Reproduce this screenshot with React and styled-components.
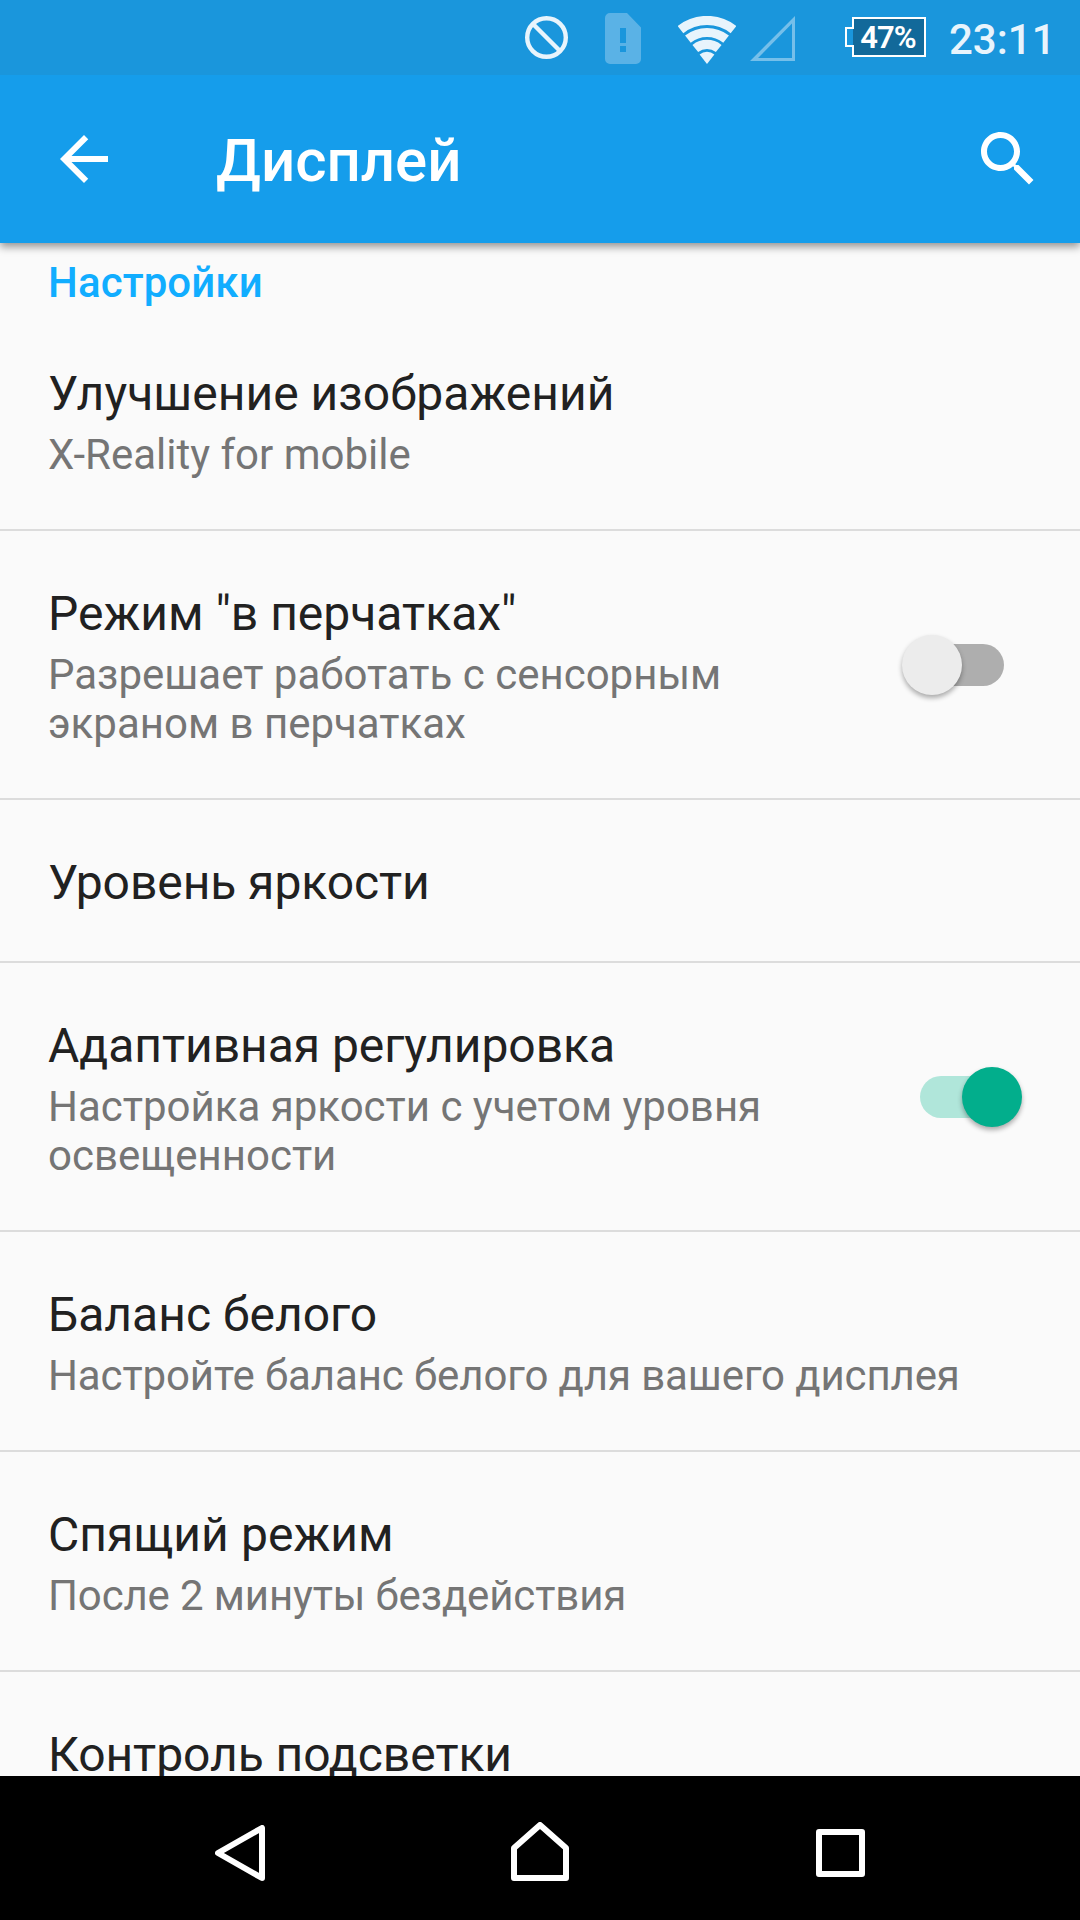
import React from 'react'
import styled, { createGlobalStyle } from 'styled-components'

const settings = [
  { title: 'Улучшение изображений', summary: 'X-Reality for mobile', titleSpacing: 0.04 },
  {
    title: 'Режим "в перчатках"',
    summary: 'Разрешает работать с сенсорным экраном в перчатках',
    toggle: true,
    on: false,
  },
  { title: 'Уровень яркости', titleSpacing: -0.07 },
  {
    title: 'Адаптивная регулировка',
    summary: 'Настройка яркости с учетом уровня освещенности',
    titleSpacing: -0.04,
    toggle: true,
    on: true,
  },
  {
    title: 'Баланс белого',
    summary: 'Настройте баланс белого для вашего дисплея',
    summarySpacing: -0.11,
  },
  {
    title: 'Спящий режим',
    summary: 'После 2 минуты бездействия',
    titleSpacing: 0.08,
    summarySpacing: -0.14,
  },
  { title: 'Контроль подсветки', titleSpacing: -0.05 },
]

function StatusBar() {
  return (
    <Status>
      <StatusIcon width="43" height="43" $top={16} $right={37}>
        <circle cx="21.5" cy="21.5" r="19.3" fill="none" stroke="#e8f4fc" strokeWidth="4.4" />
        <path d="M8 8l27 27" stroke="#e8f4fc" strokeWidth="4.4" />
      </StatusIcon>
      <StatusIcon width="36" height="51" $top={13} $right={37}>
        <path
          fill="#5ab2e6"
          fillRule="evenodd"
          d="M5 0h17l14 14.500v31.500a5 5 0 0 1-5 5h-26a5 5 0 0 1-5-5v-41a5 5 0 0 1 5-5zM15 15v15h6v-15zM15 33v6h6v-6z"
        />
      </StatusIcon>
      <StatusIcon width="58" height="48" $top={16} $right={14}>
        <g fill="none" stroke="#e8f4fc" strokeWidth="9.200">
          <path d="M2.500 13.600A43 43 0 0 1 55.500 13.600" />
          <path d="M9.900 23.100A31 31 0 0 1 48.100 23.100" />
          <path d="M17.300 32.500A19 19 0 0 1 40.700 32.500" />
        </g>
        <path fill="#e8f4fc" d="M29 48L21.600 38.400A12 12 0 0 1 36.400 38.400z" />
      </StatusIcon>
      <StatusIcon width="45" height="45" $top={16} $right={50}>
        <path d="M0 45L45 0v45zM8 42h34V7.500z" fill="#75bfea" fillRule="evenodd" />
      </StatusIcon>
      <Battery>
        <svg width="81" height="40">
          <path
            d="M8 1h72v38h-72v-10h-7v-18h7z"
            fill="#12699a"
            stroke="#fff"
            strokeWidth="2"
          />
          <path d="M2 12h6v16h-6z" fill="#1a96dc" />
        </svg>
        <BatteryText>47%</BatteryText>
      </Battery>
      <Clock>23:11</Clock>
    </Status>
  )
}

function App() {
  return (
    <Screen>
      <GlobalStyle />
      <StatusBar />
      <AppBar>
        <IconButton>
          <svg width="72" height="72" viewBox="0 0 24 24" fill="#fff">
            <path d="M20 11H7.830l5.590-5.590L12 4l-8 8 8 8 1.410-1.410L7.830 13H20v-2z" />
          </svg>
        </IconButton>
        <PageTitle>Дисплей</PageTitle>
        <IconButton>
          <svg width="72" height="72" viewBox="0 0 24 24" fill="#fff">
            <path d="M15.500 14h-.79l-.28-.27C15.410 12.590 16 11.110 16 9.500 16 5.910 13.090 3 9.500 3S3 5.910 3 9.500 5.910 16 9.500 16c1.610 0 3.090-.59 4.230-1.570l.27.28v.79l5 4.990L20.490 19l-4.990-5zm-6 0C7.010 14 5 11.990 5 9.500S7.010 5 9.500 5 14 7.010 14 9.500 11.990 14 9.500 14z" />
          </svg>
        </IconButton>
      </AppBar>
      <List>
        <SectionTitle>Настройки</SectionTitle>
        {settings.map((item) => (
          <Row key={item.title}>
            <Texts>
              <Title $spacing={item.titleSpacing}>{item.title}</Title>
              {item.summary && <Summary $spacing={item.summarySpacing}>{item.summary}</Summary>}
            </Texts>
            {item.toggle && (
              <Track $on={item.on}>
                <Thumb $on={item.on} />
              </Track>
            )}
          </Row>
        ))}
      </List>
      <NavBar>
        <svg width="50" height="56">
          <path d="M47 3v50L3 28z" {...navStroke} />
        </svg>
        <svg width="59" height="59">
          <path d="M3 56V26L29 3l26 23v30z" {...navStroke} />
        </svg>
        <svg width="49" height="48">
          <path d="M3 3h43v42H3z" {...navStroke} />
        </svg>
      </NavBar>
    </Screen>
  )
}

export default App

const navStroke = {
  fill: 'none',
  stroke: '#fff',
  strokeWidth: 6,
  strokeLinejoin: 'round',
}

const GlobalStyle = createGlobalStyle`
  * {
    box-sizing: border-box;
  }

  body {
    margin: 0;
    background: #fafafa;
    font-family: Roboto, 'Noto Sans', sans-serif;
  }
`

const Screen = styled.div`
  display: flex;
  flex-direction: column;
  width: 1080px;
  height: 1920px;
  overflow: hidden;
  background: #fafafa;
`

const Status = styled.div`
  position: relative;
  z-index: 2;
  display: flex;
  flex: none;
  align-items: flex-start;
  justify-content: flex-end;
  height: 75px;
  padding-right: 29px;
  background: #1a96dc;
`

const StatusIcon = styled.svg`
  flex: none;
  margin-top: ${(props) => props.$top}px;
  margin-right: ${(props) => props.$right}px;
`

const Battery = styled.div`
  position: relative;
  width: 81px;
  height: 40px;
  margin-top: 17px;
  margin-right: 23px;

  svg {
    display: block;
  }
`

const BatteryText = styled.span`
  position: absolute;
  top: 1px;
  left: 6px;
  width: 74px;
  text-align: center;
  font-size: 31px;
  font-weight: 600;
  letter-spacing: -0.9px;
  line-height: 40px;
  color: #fff;
`

const Clock = styled.span`
  width: 102px;
  margin-top: 15px;
  font-size: 42px;
  font-weight: 500;
  line-height: 49px;
  white-space: nowrap;
  color: #e8f4fc;
`

const AppBar = styled.header`
  position: relative;
  z-index: 1;
  display: flex;
  flex: none;
  align-items: center;
  height: 168px;
  padding: 0 36px 0 48px;
  background: #159deb;
  box-shadow: 0 4px 8px rgba(0, 0, 0, 0.4);
`

const IconButton = styled.button`
  width: 72px;
  height: 72px;
  padding: 0;
  border: none;
  background: none;

  svg {
    display: block;
  }
`

const PageTitle = styled.h1`
  flex: 1;
  margin: 4px 0 0 96px;
  font-size: 60px;
  font-weight: 500;
  line-height: 70px;
  color: #fff;
`

const List = styled.main`
  flex: 1;
  min-height: 0;
  overflow: hidden;
`

const SectionTitle = styled.h2`
  height: 68px;
  margin: 0;
  padding: 15px 48px 0;
  font-size: 42px;
  font-weight: 500;
  letter-spacing: 0.1px;
  line-height: 49px;
  color: #11adff;
`

const Row = styled.div`
  display: flex;
  align-items: center;
  justify-content: space-between;
  padding: 55px 76px 50px 48px;
  border-bottom: 2px solid #dcdcdc;
`

const Texts = styled.div`
  max-width: 930px;
`

const Title = styled.div`
  font-size: 48px;
  line-height: 56px;
  letter-spacing: ${(props) => props.$spacing || 0}px;
  color: #212121;
`

const Summary = styled.div`
  margin-top: 8px;
  font-size: 42px;
  line-height: 49px;
  letter-spacing: ${(props) => props.$spacing || 0}px;
  color: #757575;
`

const Track = styled.div`
  position: relative;
  flex: none;
  width: 84px;
  height: 42px;
  margin-bottom: 4px;
  margin-left: 80px;
  border-radius: 21px;
  background: ${(props) => (props.$on ? '#b0e6da' : '#aeaeae')};
`

const Thumb = styled.span`
  position: absolute;
  top: -9.5px;
  left: ${(props) => (props.$on ? 41.5 : -18)}px;
  width: 60px;
  height: 60px;
  border-radius: 50%;
  background: ${(props) => (props.$on ? '#02ae8c' : '#ececec')};
  box-shadow: 0 3px 5px rgba(0, 0, 0, 0.32);
`

const NavBar = styled.nav`
  display: flex;
  flex: none;
  align-items: flex-end;
  justify-content: space-between;
  height: 144px;
  padding: 0 215px 39px;
  background: #000;

  svg:last-child {
    margin-bottom: 4px;
  }
`
